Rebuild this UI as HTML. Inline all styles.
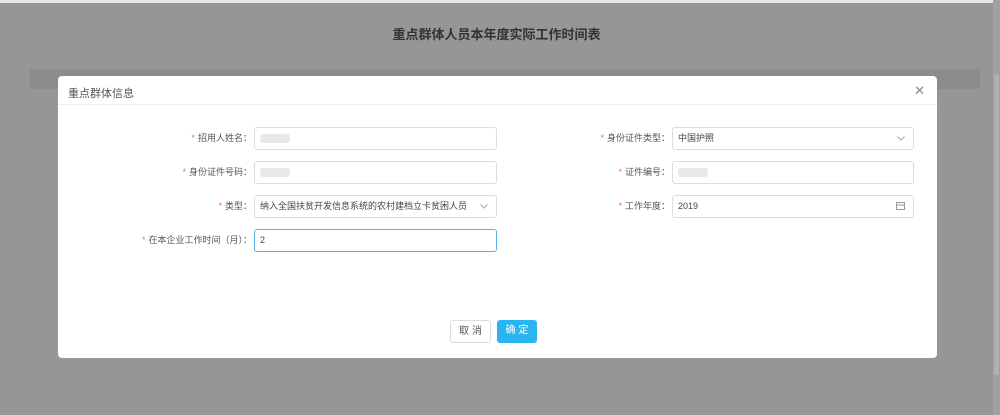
<!DOCTYPE html>
<html><head><meta charset="utf-8"><style>
*{box-sizing:border-box;margin:0;padding:0}
body{width:1000px;height:415px;background:#969696;font-family:"Liberation Sans","Noto Sans CJK SC",sans-serif;position:relative;overflow:hidden}
.top{position:absolute;left:0;top:0;width:1000px;height:3px;background:#e6e6e6}
.title{position:absolute;top:24px;left:0;width:993px;text-align:center;font-size:13px;font-weight:bold;color:#333}
.panel{position:absolute;left:30px;top:69px;width:950px;height:20px;background:#8c8c8c}
.sb{position:absolute;right:0;top:0;width:7px;height:415px;background:#a0a0a0}
.sb i{position:absolute;left:1px;top:75px;width:5px;height:300px;background:#b0b0b0}
.modal{position:absolute;left:58px;top:76px;width:879px;height:282px;background:#fff;border-radius:4px}
.hd{height:29px;border-bottom:1px solid #eee;font-size:11px;color:#555;padding:9px 0 0 10px}
.x{position:absolute;right:12px;top:7px;font-size:13px;color:#888}
.lab{position:absolute;font-size:9px;color:#555;text-align:right;line-height:23px}
.lab b{color:#f37b1d;font-weight:normal;margin-right:3px}
.inp{position:absolute;height:23px;border:1px solid #ddd;border-radius:3px;font-size:9px;color:#444;line-height:21px;padding-left:5px}
.blur{display:inline-block;width:30px;height:9px;background:#e8e8e8;vertical-align:middle;border-radius:3px}
.arr{position:absolute;right:8px;top:8px}
.btn{position:absolute;top:244px;height:23px;border-radius:3px;font-size:10px;line-height:21px;text-align:center;letter-spacing:3px;text-indent:3px}
</style></head><body>
<div class="top"></div>
<div class="title">重点群体人员本年度实际工作时间表</div>
<div class="panel"></div>
<div class="sb"><i></i></div>
<div class="modal">
<div class="hd">重点群体信息</div><div class="x">✕</div>
<div class="lab" style="right:685px;top:51px"><b>*</b>招用人姓名：</div>
<div class="inp" style="left:196px;top:51px;width:243px"><span class="blur"></span></div>
<div class="lab" style="right:685px;top:85px"><b>*</b>身份证件号码：</div>
<div class="inp" style="left:196px;top:85px;width:243px"><span class="blur"></span></div>
<div class="lab" style="right:685px;top:119px"><b>*</b>类型：</div>
<div class="inp" style="left:196px;top:119px;width:243px">纳入全国扶贫开发信息系统的农村建档立卡贫困人员<svg class="arr" width="8" height="5" viewBox="0 0 8 5"><path d="M0.5 0.5L4 4L7.5 0.5" fill="none" stroke="#aaa"/></svg></div>
<div class="lab" style="right:685px;top:153px"><b>*</b>在本企业工作时间（月）：</div>
<div class="inp" style="left:196px;top:153px;width:243px;border-color:#5cb0e6">2</div>
<div class="lab" style="right:267px;top:51px"><b>*</b>身份证件类型：</div>
<div class="inp" style="left:614px;top:51px;width:242px">中国护照<svg class="arr" width="8" height="5" viewBox="0 0 8 5"><path d="M0.5 0.5L4 4L7.5 0.5" fill="none" stroke="#aaa"/></svg></div>
<div class="lab" style="right:267px;top:85px"><b>*</b>证件编号：</div>
<div class="inp" style="left:614px;top:85px;width:242px"><span class="blur"></span></div>
<div class="lab" style="right:267px;top:119px"><b>*</b>工作年度：</div>
<div class="inp" style="left:614px;top:119px;width:242px">2019<svg class="arr" style="top:6px" width="9" height="8" viewBox="0 0 9 8"><rect x="0.5" y="0.5" width="8" height="7" fill="none" stroke="#999"/><path d="M0.5 3H8.5" stroke="#999"/></svg></div>
<div class="btn" style="left:392px;width:41px;border:1px solid #ddd;color:#555">取消</div>
<div class="btn" style="left:439px;width:40px;background:#2ab4f0;color:#fff">确定</div>
</div>
</body></html>
